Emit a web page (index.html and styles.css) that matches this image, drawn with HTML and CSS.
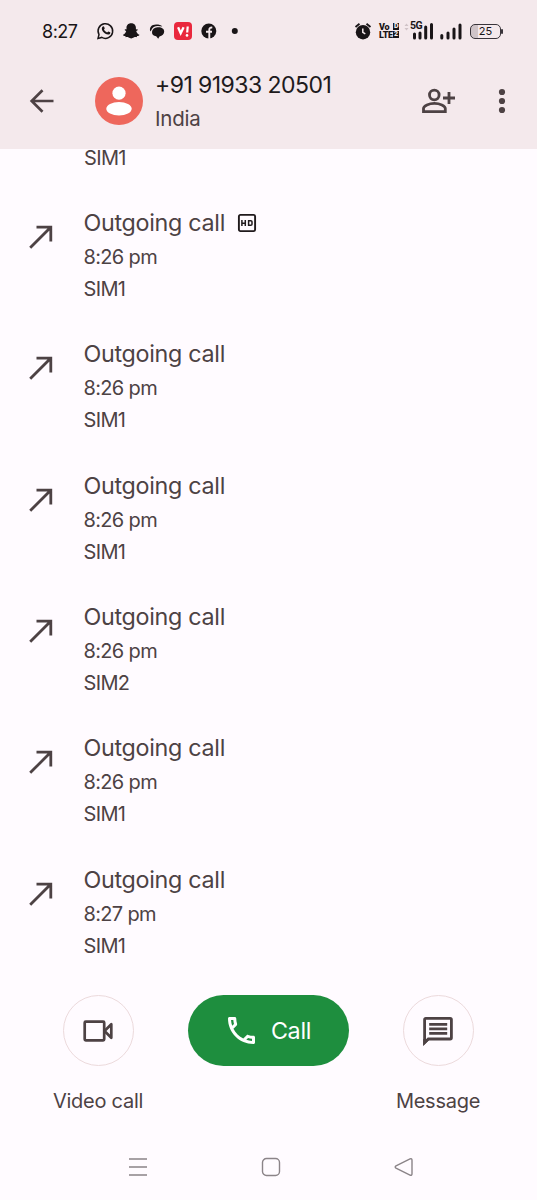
FILE: index.html
```html
<!DOCTYPE html>
<html lang="en">
<head>
<meta charset="utf-8">
<title>Call history</title>
<link rel="stylesheet" href="styles.css">
</head>
<body>
<svg class="defs" aria-hidden="true">
  <symbol id="outgoing" viewBox="0 0 24 24"><path d="M1.2 22.8 21.2 2.8M7.500 2.2H21.800V16.500" fill="none" stroke="currentColor" stroke-width="2.8"/></symbol>
</svg>
<div class="screen">
  <header class="top">
    <div class="status">
      <span class="clock">8:27</span>
      <svg class="apps" width="146" height="22" viewBox="0 0 146 22">
        <path d="M2 18.400 3 14.600A7.3 7.3 0 1 1 5.800 17.400Z" fill="none" stroke="#191517" stroke-width="1.5"/>
        <path d="M6.500 6.700c.6-.8 1.300-.7 1.600 0l.6 1.500c.2.5-.7 1-.7 1.400.6 1.500 1.700 2.300 3 2.800.5.1 1-1.100 1.500-.9l1.600.8c.5.3.2 1.400-.5 1.900-1.300.9-3.100.2-4.600-.8-1.600-1.200-2.900-2.800-3.200-4.500-.1-.9.200-1.700.7-2.200Z" fill="#191517"/>
        <path d="M35.200 3.200c3.300 0 4.800 2.200 4.700 4.800v1.300c.6.300 1.200-.4 1.700.1.400.7-.7 1.200-1.400 1.600.5 2 1.500 3.100 3.200 3.700.2.900-1.200 1.200-2.300 1.400l-.4 1.100c-1.100-.1-2-.2-2.900.4-1.500 1.100-3.700 1.100-5.200 0-.9-.6-1.800-.5-2.900-.4l-.4-1.100c-1.100-.2-2.500-.5-2.300-1.400 1.700-.6 2.700-1.700 3.200-3.700-.7-.4-1.800-.9-1.400-1.600.5-.5 1.100.2 1.700-.1V8c-.1-2.600 1.400-4.800 4.700-4.800Z" fill="#191517"/>
        <path d="M54.300 11.500c-1.300-4.200 1.300-7 5.800-7 3 0 5 .5 6.200 2-5-1.200-9.500-1-11.200 4Z" fill="#191517"/>
        <path d="M61.500 7.300c4-.4 6.700 1.500 6.700 4.300 0 2.700-2 4.600-4.700 4.800l-1.300 2.300-2-2.500c-2.800-.3-4.300-1.700-4.200-4.200.1-2.500 2.200-4.400 5.500-4.700Z" fill="#191517"/>
        <rect x="78" y="2" width="18" height="18" rx="4" fill="#e9283d"/>
        <path d="m82.100 7.300 2.600 6 2.900-6" fill="none" stroke="#fff" stroke-width="2.300"/>
        <path d="m91.700 6.500-.5 6" stroke="#fff" stroke-width="2.200"/><circle cx="91" cy="15.400" r="1.300" fill="#fff"/>
        <circle cx="112.800" cy="11" r="7.500" fill="#191517"/>
        <path d="M113.300 19v-9.300q0-2.500 3-2.100M110 11.800h6" fill="none" stroke="#f4e9ec" stroke-width="1.900"/>
        <circle cx="138.800" cy="11" r="3" fill="#191517"/>
      </svg>
      <div class="system">
        <svg width="18" height="20" viewBox="0 0 18 20"><circle cx="9" cy="11.200" r="7.200" fill="#191517"/><path d="M1.500 6 5.500 2.700M16.500 6 12.500 2.700" stroke="#191517" stroke-width="1.800"/><path d="M8.800 7.500v3.800l2.500 1.500" fill="none" stroke="#f4e9ec" stroke-width="1.500"/></svg>
        <span class="volte"><span>Vo<b>D</b></span><span>LTE<b>2</b></span></span>
        <span class="signal">
          <svg width="30" height="20" viewBox="0 0 30 20"><path d="m.5 5 2-2.400L4.500 5ZM.5 7h4l-2 2.400Z" fill="#cfc3c7"/><path d="M10.500 17v-4M16 17v-5M21.700 17V6M27.500 17V3.500" stroke="#191517" stroke-width="3" stroke-linecap="round"/></svg>
          <span class="net">5G</span>
        </span>
        <svg class="bars" width="22" height="20" viewBox="0 0 22 20"><path d="M1.800 17v-2.500M8 17v-5M14 17V8M20 17V4" stroke="#191517" stroke-width="3" stroke-linecap="round"/></svg>
        <span class="battery">25</span>
      </div>
    </div>
    <div class="contact">
      <svg class="back" width="25" height="24" viewBox="0 0 25 24"><path d="M24.500 12H3M13.500 1.200 2.700 12l10.800 10.800" fill="none" stroke="#4d4244" stroke-width="2.700"/></svg>
      <svg class="avatar" width="48" height="48" viewBox="0 0 48 48"><circle cx="24" cy="24" r="24" fill="#ee675c"/><circle cx="24" cy="16.200" r="6.600" fill="#fff"/><ellipse cx="24" cy="31.700" rx="12.700" ry="6.700" fill="#fff"/></svg>
      <div class="who"><div class="number">+91 91933 20501</div><div class="place">India</div></div>
      <svg class="add" width="34" height="26" viewBox="0 0 34 26"><g fill="none" stroke="#4d4244" stroke-width="2.800"><circle cx="12.300" cy="7" r="4.800"/><path d="M1.500 23.600v-3c0-2.900 5.500-5.200 10.900-5.200s10.900 2.300 10.900 5.200v3ZM21 10h12M27 4v12"/></g></svg>
      <svg class="more" width="8" height="26" viewBox="0 0 8 26"><g fill="#4d4244"><circle cx="4" cy="4" r="3.100"/><circle cx="4" cy="13" r="3.100"/><circle cx="4" cy="22" r="3.100"/></g></svg>
    </div>
  </header>

  <main class="history">
    <div class="entry partial"><div class="sim">SIM1</div></div>
    <div class="entry"><svg class="arrow"><use href="#outgoing"/></svg><div class="details"><div class="title"><span>Outgoing call</span><svg width="20" height="20" viewBox="0 0 20 20"><rect x="1.900" y="1.900" width="16.200" height="16.200" rx="1.500" fill="none" stroke="#201a1c" stroke-width="1.900"/><path d="M4.900 7v6M8.300 7v6M4.900 10.200h3.400M11.600 7.700h2.200q1.200 0 1.200 1v2.600q0 1-1.200 1h-2.200Z" fill="none" stroke="#201a1c" stroke-width="1.500"/></svg></div><div class="time">8:26 pm</div><div class="sim">SIM1</div></div></div>
    <div class="entry"><svg class="arrow"><use href="#outgoing"/></svg><div class="details"><div class="title"><span>Outgoing call</span></div><div class="time">8:26 pm</div><div class="sim">SIM1</div></div></div>
    <div class="entry"><svg class="arrow"><use href="#outgoing"/></svg><div class="details"><div class="title"><span>Outgoing call</span></div><div class="time">8:26 pm</div><div class="sim">SIM1</div></div></div>
    <div class="entry"><svg class="arrow"><use href="#outgoing"/></svg><div class="details"><div class="title"><span>Outgoing call</span></div><div class="time">8:26 pm</div><div class="sim">SIM2</div></div></div>
    <div class="entry"><svg class="arrow"><use href="#outgoing"/></svg><div class="details"><div class="title"><span>Outgoing call</span></div><div class="time">8:26 pm</div><div class="sim">SIM1</div></div></div>
    <div class="entry"><svg class="arrow"><use href="#outgoing"/></svg><div class="details"><div class="title"><span>Outgoing call</span></div><div class="time">8:27 pm</div><div class="sim">SIM1</div></div></div>
  </main>

  <section class="actions">
    <div class="action"><span class="round"><svg width="32" height="24" viewBox="0 0 32 24"><g fill="none" stroke="#4d4244" stroke-width="2.700" stroke-linejoin="round"><rect x="2.700" y="2.700" width="19.500" height="18.600" rx="1"/><path d="M22.500 12 29.300 5.200v13.600Z"/></g></svg></span><span class="label">Video call</span></div>
    <button class="call"><svg width="27" height="27" viewBox="3 3 18 18"><path fill="#fff" d="M6.540 5c.06.89.21 1.760.45 2.590l-1.200 1.200c-.41-1.200-.67-2.470-.76-3.790h1.510m9.860 12.020c.85.24 1.720.39 2.600.45v1.490c-1.320-.09-2.590-.35-3.800-.75l1.200-1.190M7.500 3H4c-.55 0-1 .45-1 1 0 9.390 7.610 17 17 17 .55 0 1-.45 1-1v-3.490c0-.55-.45-1-1-1-1.240 0-2.450-.2-3.570-.57-.1-.04-.21-.05-.31-.05-.26 0-.51.1-.71.29l-2.200 2.200c-2.830-1.450-5.150-3.760-6.590-6.590l2.200-2.200c.28-.28.36-.67.25-1.020C8.700 6.450 8.500 5.250 8.500 4c0-.55-.45-1-1-1z"/></svg><span>Call</span></button>
    <div class="action"><span class="round"><svg width="32" height="32" viewBox="0 0 32 32"><path d="M2.600 27.500V4.600q0-1.200 1.200-1.200h24.400q1.200 0 1.200 1.200v18.200q0 1.200-1.200 1.200H6.300Z" fill="none" stroke="#4d4244" stroke-width="2.800"/><path d="M1.200 31V24l6 1Z" fill="#4d4244"/><path d="M7.200 9.300h18M7.200 13.800h18M7.200 18.300h18" stroke="#4d4244" stroke-width="2.700"/></svg></span><span class="label">Message</span></div>
  </section>

  <nav class="nav">
    <svg width="18" height="20" viewBox="0 0 18 20"><path d="M0 2h18M0 10h18M0 18h18" stroke="#8b8488" stroke-width="1.500"/></svg>
    <svg width="20" height="20" viewBox="0 0 20 20"><rect x="1.500" y="1.500" width="17" height="17" rx="4" fill="none" stroke="#8b8488" stroke-width="1.400"/></svg>
    <svg width="20" height="20" viewBox="0 0 20 20"><path d="M2 8.900 16 1.900Q18 1.200 18 3.200V16.800Q18 18.800 16 18.100L2 11.100Q.4 10 2 8.900Z" fill="none" stroke="#8b8488" stroke-width="1.400"/></svg>
  </nav>
</div>
</body>
</html>
```
FILE: styles.css
```css
* { box-sizing: border-box; }
body { margin: 0; background: #fffbff; color: #4d4244; font-family: Inter, "Open Sans", sans-serif; font-weight: 400; }
svg { display: block; flex: none; }
.defs { display: none; }
.screen { width: 537px; height: 1200px; display: flex; flex-direction: column; overflow: hidden; white-space: nowrap; }
.top { height: 149px; flex: none; background: #f4e9ec; }
.status { height: 62px; padding: 0 36px 0 42px; display: flex; align-items: center; color: #191517; }
.clock { width: 54px; font-size: 18px; font-weight: 400; letter-spacing: -.5px; }
.system { margin-left: auto; display: flex; align-items: center; }
.volte { width: 20px; margin-left: 7px; display: flex; flex-direction: column; font: 900 9px/8px Roboto, sans-serif; letter-spacing: -.3px; }
.volte span { display: flex; justify-content: space-between; }
.volte b { width: 6px; height: 7px; background: #191517; color: #f4e9ec; font-size: 7px; line-height: 7px; text-align: center; }
.signal { position: relative; margin-left: 5px; }
.net { position: absolute; left: 6px; top: 0; padding-right: 1px; background: #f4e9ec; font: 700 10.500px/9px Roboto, sans-serif; letter-spacing: -.5px; }
.bars { margin-left: 6px; }
.battery { position: relative; width: 31px; height: 15px; margin-left: 8px; border: 1.500px solid #39343a; border-radius: 5px; background: linear-gradient(90deg, #cfc4c8 7px, transparent 7px); font-size: 11px; line-height: 13px; text-align: center; }
.battery::after { content: ""; position: absolute; right: -3px; top: 4px; width: 2px; height: 5px; background: #39343a; border-radius: 1px; }
.contact { height: 78px; padding-left: 29px; display: flex; align-items: center; }
.avatar { margin-left: 41px; }
.who { width: 279px; padding: 2px 0 0 12px; }
.number { font-size: 23px; line-height: 34px; color: #201a1c; letter-spacing: -.55px; }
.place { font-size: 20.500px; line-height: 34px; letter-spacing: -.2px; }
.more { margin-left: 41.500px; }
.history { height: 830px; flex: none; }
.entry { height: 131.330px; padding: 31.330px 0 0 29.300px; display: flex; }
.entry.partial { height: 24.700px; padding: 0 0 0 84px; }
.arrow { width: 24px; height: 24px; margin-top: 20px; }
.details { margin-left: 30.200px; }
.title { height: 36px; padding-bottom: 1px; display: flex; align-items: center; gap: 10px; font-size: 23.300px; letter-spacing: -.3px; }
.title span { width: 144px; }
.time, .sim { height: 32px; font-size: 20px; line-height: 32px; letter-spacing: -.65px; }
.partial .sim { height: 18px; line-height: 18px; }
.actions { height: 140px; padding: 16px 53px 0 52px; display: flex; align-items: flex-start; justify-content: space-between; }
.action { width: 92px; display: flex; flex-direction: column; align-items: center; }
.round { width: 71px; height: 71px; border: 1px solid #ecdadc; border-radius: 50%; display: grid; place-items: center; }
.label { margin-top: 19px; font-size: 20px; line-height: 32px; letter-spacing: -.25px; }
.call { width: 161px; height: 71px; padding: 0 0 0 3px; border: 0; border-radius: 36px; background: #1e8e3e; color: #fff; display: flex; align-items: center; justify-content: center; gap: 16px; font: 400 23.300px Inter, sans-serif; letter-spacing: -.3px; }
.nav { flex: 1; padding: 15px 123px 0 129px; display: flex; align-items: center; justify-content: space-between; }
```
